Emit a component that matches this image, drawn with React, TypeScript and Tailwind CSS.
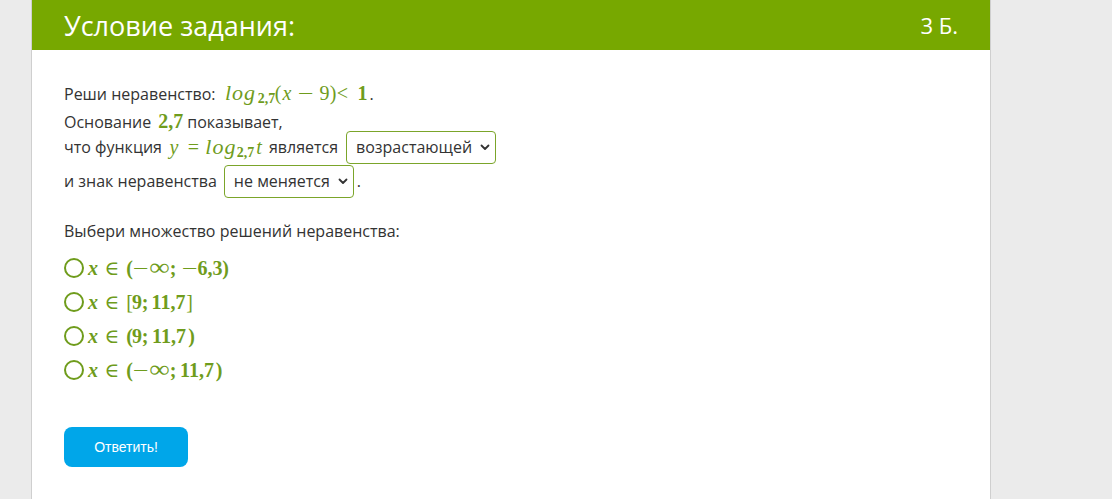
import React from "react";

const green = "text-[#6f9c1c]";
const serif = { fontFamily: '"Liberation Serif", "DejaVu Serif", serif' };

function G({ c, children }: { c: string; children: React.ReactNode }) {
  return <span className={`inline-flex shrink-0 justify-center whitespace-nowrap ${c}`}>{children}</span>;
}

function Chevron() {
  return (
    <svg width="10" height="10" viewBox="0 0 10 10" className="ml-2 shrink-0">
      <path d="M1.5 3.5 L5 7 L8.5 3.5" fill="none" stroke="#333" strokeWidth="1.8" strokeLinecap="round" strokeLinejoin="round" />
    </svg>
  );
}

function Select({ label, w }: { label: string; w: string }) {
  return (
    <span
      className={`inline-flex h-[33px] ${w} shrink-0 items-center justify-between whitespace-nowrap rounded-[4px] border border-[#7ba52a] bg-white pl-[9px] pr-[7px] text-[16px] text-[#333]`}
    >
      <span>{label}</span>
      <Chevron />
    </span>
  );
}

function Radio({ children }: { children: React.ReactNode }) {
  return (
    <div className="flex h-[34px] items-center">
      <span className="h-[20px] w-[20px] shrink-0 rounded-full border-2 border-[#6f9c1c] bg-white" />
      <span className={`ml-[4px] flex items-baseline text-[20px] font-bold ${green}`} style={serif}>
        {children}
      </span>
    </div>
  );
}

function XIn() {
  return (
    <>
      <G c="w-[10px]">
        <i>x</i>
      </G>
      <G c="ml-[8px] w-[12px] font-normal">∈</G>
    </>
  );
}

function Minus({ c }: { c: string }) {
  return (
    <G c={c}>
      <span className="inline-block scale-x-[1.4] font-normal">−</span>
    </G>
  );
}

function Inf() {
  return (
    <G c="ml-[1px] w-[21px]">
      <span className="inline-block scale-x-[1.2] text-[24px] font-normal leading-none">∞</span>
    </G>
  );
}

function Log() {
  return (
    <G c="w-[32px] text-[22px] tracking-[1px]">
      <i>log</i>
    </G>
  );
}

export default function App() {
  return (
    <div
      className="flex min-h-[499px] w-full whitespace-nowrap bg-[#ebebeb]"
      style={{ fontFamily: '"Open Sans", "Noto Sans", sans-serif' }}
    >
      <div className="ml-[31px] w-[960px] border-x border-[#cfcfcf] bg-white">
        <div className="flex h-[50px] items-center justify-between bg-[#77a800] px-[32px] text-white">
          <span className="text-[27px] leading-none">Условие задания:</span>
          <span className="text-[22px] leading-none">3 Б.</span>
        </div>
        <div className="pl-[32px] pt-[30px] text-[16px] text-[#333]">
          <div className="flex h-[26px] items-baseline pt-[2px]">
            <span>Реши неравенство:</span>
            <span className={`ml-[9px] flex items-baseline text-[20px] leading-none ${green}`} style={serif}>
              <Log />
              <G c="ml-[1px] w-[18px] translate-y-[3px] text-[14px] font-bold leading-none">2,7</G>
              <G c="w-[5px]">(</G>
              <G c="ml-[1px] w-[11px]">
                <i>x</i>
              </G>
              <Minus c="ml-[6px] w-[15px]" />
              <G c="ml-[7px] w-[8px]">9</G>
              <G c="ml-[2px] w-[5px]">)</G>
              <G c="w-[14px]">&lt;</G>
              <G c="ml-[9px] w-[8px] font-bold">1</G>
            </span>
            <span className="ml-[3px]">.</span>
          </div>
          <div className="flex h-[24px] items-baseline">
            <span>Основание</span>
            <G c={`ml-[6px] w-[27px] text-[20px] font-bold ${green}`}>
              <span style={serif}>2,7</span>
            </G>
            <span className="ml-[3px]">показывает,</span>
          </div>
          <div className="flex h-[34px] items-center">
            <span>что функция</span>
            <span className={`ml-[7px] flex items-baseline text-[20px] leading-none ${green}`} style={serif}>
              <G c="w-[10px]">
                <i>y</i>
              </G>
              <G c="ml-[6px] w-[17px]">=</G>
              <span className="ml-[3px] flex items-baseline">
                <Log />
              </span>
              <G c="w-[17px] translate-y-[3px] text-[14px] font-bold leading-none">2,7</G>
              <G c="ml-[1px] w-[8px]">
                <i>t</i>
              </G>
            </span>
            <span className="ml-[6px] mr-[8px]">является</span>
            <Select label="возрастающей" w="w-[150px]" />
          </div>
          <div className="flex h-[34px] items-center">
            <span className="mr-[7px]">и знак неравенства</span>
            <Select label="не меняется" w="w-[130px]" />
            <span className="ml-[3px]">.</span>
          </div>
          <div className="mt-[20px] flex h-[26px] items-center">Выбери множество решений неравенства:</div>
          <div className="mt-[7px]">
            <Radio>
              <XIn />
              <G c="ml-[9px] w-[5px]">(</G>
              <Minus c="ml-[1px] w-[15px]" />
              <Inf />
              <G c="ml-[1px] w-[4px]">;</G>
              <Minus c="ml-[7px] w-[15px]" />
              <G c="ml-[1px] w-[24px]">6,3</G>
              <G c="ml-[1px] w-[5px]">)</G>
            </Radio>
            <Radio>
              <XIn />
              <G c="ml-[9px] w-[5px] font-normal">[</G>
              <G c="w-[10px]">9</G>
              <G c="ml-[1px] w-[4px]">;</G>
              <G c="ml-[5px] w-[33px]">11,7</G>
              <G c="ml-[2px] w-[5px] font-normal">]</G>
            </Radio>
            <Radio>
              <XIn />
              <G c="ml-[9px] w-[5px]">(</G>
              <G c="w-[10px]">9</G>
              <G c="ml-[1px] w-[4px]">;</G>
              <G c="ml-[5px] w-[34px]">11,7</G>
              <G c="ml-[2px] w-[7px]">)</G>
            </Radio>
            <Radio>
              <XIn />
              <G c="ml-[9px] w-[5px]">(</G>
              <Minus c="ml-[1px] w-[15px]" />
              <Inf />
              <G c="ml-[1px] w-[4px]">;</G>
              <G c="ml-[5px] w-[34px]">11,7</G>
              <G c="ml-[2px] w-[6px]">)</G>
            </Radio>
          </div>
          <button
            className="mt-[40px] flex h-[40px] w-[124px] items-center justify-center rounded-[8px] bg-[#00a6e9] text-[14px] text-white"
            style={{ fontFamily: '"Liberation Sans", Arial, sans-serif' }}
          >
            Ответить!
          </button>
        </div>
      </div>
    </div>
  );
}
